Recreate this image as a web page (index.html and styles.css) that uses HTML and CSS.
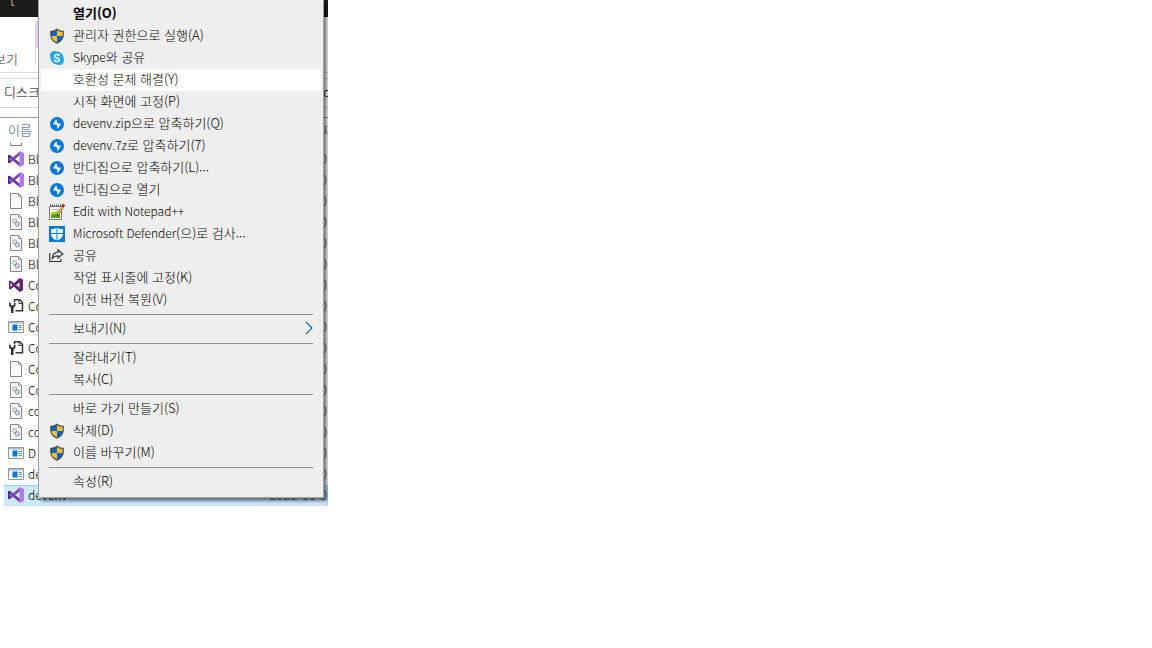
FILE: index.html
```html
<!DOCTYPE html>
<html lang="ko">
<head>
<meta charset="utf-8">
<title>devenv</title>
<link rel="stylesheet" href="styles.css">
</head>
<body>
<svg class="sprite" aria-hidden="true">
  <symbol id="shield" viewBox="0 0 16 16">
    <path d="M8 0.5C6.3 2 3.800 2.800 1.200 2.800V7c0 4 2.800 6.800 6.800 8.800 4-2 6.800-4.800 6.800-8.800V2.800C12.200 2.800 9.700 2 8 0.500z" fill="#4b4b4b"/>
    <path d="M8 2C6.500 3.200 4.500 3.900 2.400 4V8H8z" fill="#0a63c9"/>
    <path d="M8 2C9.500 3.200 11.500 3.900 13.600 4V8H8z" fill="#ffc02e"/>
    <path d="M2.400 8H8v6.400C4.800 12.800 2.600 10.800 2.400 8z" fill="#ffc02e"/>
    <path d="M13.600 8H8v6.400c3.200-1.600 5.400-3.600 5.600-6.400z" fill="#0a63c9"/>
  </symbol>
  <symbol id="skype" viewBox="0 0 16 16">
    <circle cx="5.500" cy="5.500" r="4.500" fill="#28a8ea"/><circle cx="10.500" cy="10.500" r="4.500" fill="#28a8ea"/><circle cx="8" cy="8" r="6.500" fill="#28a8ea"/>
    <path d="M10.300 5.500C9.700 4.300 5.900 4 5.900 6.200 5.900 8.300 10.300 7.500 10.300 9.800c0 2.300-4 2-4.700.4" fill="none" stroke="#fff" stroke-width="1.600" stroke-linecap="round"/>
  </symbol>
  <symbol id="bandizip" viewBox="0 0 16 16">
    <circle cx="8" cy="8" r="7" fill="#0078d7"/>
    <path d="M7.200 3L4 8.300 7.600 8.800 8.800 13 12 7.700 8.400 7.200z" fill="#fff"/>
  </symbol>
  <symbol id="notepad" viewBox="0 0 16 16">
    <path d="M.5 2.500h12v13H.5z" fill="#fff" stroke="#777"/>
    <path d="M2 14V8l9-1v7z" fill="#9bd63a"/><path d="M2 14v-3l9-2v5z" fill="#51a00c"/>
    <path d="M1 1.500h11" stroke="#555" stroke-width="2" stroke-dasharray="1 1"/>
    <path d="M3 5.500h7" stroke="#bbb"/>
    <path d="M13.800 2.500L8.800 11" stroke="#6c4b16" stroke-width="2.600"/><path d="M13.600 3L9 10.600" stroke="#ffc83b" stroke-width="1.500"/>
    <path d="M13 .8l2.600 1.400" stroke="#a91523" stroke-width="2.200"/><path d="M8.200 12.200l.3-2 1.400.8z" fill="#222"/>
  </symbol>
  <symbol id="defender" viewBox="0 0 16 16">
    <path d="M0 0h16v16H0z" fill="#0078d7"/>
    <path d="M8 1.500C6.500 2.700 4.300 3.200 2 3.300V8c0 3 2.800 5.200 6 6.700C11.200 13.200 14 11 14 8V3.300C11.700 3.200 9.500 2.700 8 1.500z" fill="#fff"/>
    <path d="M8 1v14M1 7.500h14" stroke="#0078d7"/>
  </symbol>
  <symbol id="share" viewBox="0 0 16 16">
    <path d="M.8 5v8.500h11v-2.500M9 1.800L13.800 6 9 10V7.800C6.500 7.600 4.800 8.400 3.300 10.400 3.500 6.900 5.500 4.400 9 4.200z" fill="none" stroke="#333" stroke-width="1.200"/>
  </symbol>
  <symbol id="vs" viewBox="0 0 16 16">
    <path d="M0 4.500L1.800 3.700 12 12v3.500L0 5.500z" fill="#6634a6"/>
    <path d="M0 11.500L1.800 12.300 12 4V.5L0 10.500z" fill="#7b43bd"/>
    <path d="M0 4.500L1.800 3.700V12.300L0 11.500z" fill="#52218f"/>
    <path d="M11.500 0L16 2v12l-4.500 2z" fill="#b179f1"/>
  </symbol>
  <symbol id="blend" viewBox="0 0 16 16">
    <path fill-rule="evenodd" d="M11.500 1L15 2.500v11L11.500 15 6 9.700 2.500 12.500 1 11.700V4.300L2.500 3.500 6 6.300zM11.500 5.200L8 8l3.500 2.800zM2.500 6v4L4.500 8z" fill="#68217a"/>
  </symbol>
  <symbol id="page" viewBox="0 0 16 16">
    <path d="M2.500 .5h8l3 3v12h-11z" fill="#fafafa" stroke="#858585"/><path d="M10.500 .5v3h3" fill="none" stroke="#999"/>
  </symbol>
  <symbol id="config" viewBox="0 0 16 16">
    <path d="M2.500 .5h8l3 3v12h-11z" fill="#fafafa" stroke="#858585"/><path d="M10.500 .5v3h3" fill="none" stroke="#999"/>
    <circle cx="6.700" cy="6.800" r="1.900" fill="#eef6fa" stroke="#87969e" stroke-width="1.300" stroke-dasharray="1 .5"/>
    <circle cx="9.300" cy="9.800" r="2.100" fill="#cfe3ee" stroke="#7d8f98" stroke-width="1.300" stroke-dasharray="1 .5"/>
  </symbol>
  <symbol id="tool" viewBox="0 0 16 16">
    <path d="M6.500 4V1.800h5.300L14.500 4.500v8.300H7.500" fill="none" stroke="#383838" stroke-width="1.500"/><path d="M11 2v3.500h3" fill="none" stroke="#383838"/>
    <path d="M1 4.500v3L3 10v5h2.500v-5l2-2.500v-3L5.800 5v2.200H2.800V5z" fill="#333"/>
  </symbol>
  <symbol id="app" viewBox="0 0 16 16">
    <path d="M.5 2.500h15v11H.5z" fill="#fff" stroke="#89969d"/><path d="M1 3h14v1.500H1z" fill="#aebbc2"/>
    <path d="M4.500 5.500h5v6h-5z" fill="#0078d7"/><path d="M10.500 6.500h3.500M10.500 8.500h3.500M10.500 10.500h3.500" stroke="#6d8796"/>
  </symbol>
  <symbol id="chevron" viewBox="0 0 8 14"><path d="M1 1l6 6-6 6" fill="none" stroke="#1268b0" stroke-width="1.200"/></symbol>
</svg>

<main class="explorer">
  <header class="titlebar"><span class="titlebar-text">t</span></header>
  <div class="ribbon">
    <button class="ribbon-tab">보기</button>
    <span class="ribbon-context"></span>
  </div>
  <div class="address"><span>디스크</span><span class="address-end">d</span></div>
  <table class="files">
    <thead><tr><th class="name">이름</th><th class="date">수정한 날짜</th></tr></thead>
    <tbody>
      <tr class="cut"><td class="name"><span class="file"><svg class="icon"><use href="#config"/></svg></span></td><td></td></tr>
      <tr><td class="name"><span class="file"><svg class="icon"><use href="#vs"/></svg>Bl</span></td><td class="date">2022-11-0</td></tr>
      <tr><td class="name"><span class="file"><svg class="icon"><use href="#vs"/></svg>Bl</span></td><td class="date">2022-11-0</td></tr>
      <tr><td class="name"><span class="file"><svg class="icon"><use href="#page"/></svg>Bl</span></td><td class="date">2022-11-0</td></tr>
      <tr><td class="name"><span class="file"><svg class="icon"><use href="#config"/></svg>Bl</span></td><td class="date">2022-11-0</td></tr>
      <tr><td class="name"><span class="file"><svg class="icon"><use href="#config"/></svg>Bl</span></td><td class="date">2022-11-0</td></tr>
      <tr><td class="name"><span class="file"><svg class="icon"><use href="#config"/></svg>Bl</span></td><td class="date">2022-11-0</td></tr>
      <tr><td class="name"><span class="file"><svg class="icon"><use href="#blend"/></svg>Co</span></td><td class="date">2022-11-0</td></tr>
      <tr><td class="name"><span class="file"><svg class="icon"><use href="#tool"/></svg>Co</span></td><td class="date">2022-11-0</td></tr>
      <tr><td class="name"><span class="file"><svg class="icon"><use href="#app"/></svg>Co</span></td><td class="date">2022-11-0</td></tr>
      <tr><td class="name"><span class="file"><svg class="icon"><use href="#tool"/></svg>Co</span></td><td class="date">2022-11-0</td></tr>
      <tr><td class="name"><span class="file"><svg class="icon"><use href="#page"/></svg>Co</span></td><td class="date">2022-11-0</td></tr>
      <tr><td class="name"><span class="file"><svg class="icon"><use href="#config"/></svg>Co</span></td><td class="date">2022-11-0</td></tr>
      <tr><td class="name"><span class="file"><svg class="icon"><use href="#config"/></svg>co</span></td><td class="date">2022-11-0</td></tr>
      <tr><td class="name"><span class="file"><svg class="icon"><use href="#config"/></svg>co</span></td><td class="date">2022-11-0</td></tr>
      <tr><td class="name"><span class="file"><svg class="icon"><use href="#app"/></svg>D</span></td><td class="date">2022-11-0</td></tr>
      <tr><td class="name"><span class="file"><svg class="icon"><use href="#app"/></svg>de</span></td><td class="date">2022-11-0</td></tr>
      <tr class="selected"><td class="name"><span class="file"><svg class="icon"><use href="#vs"/></svg>devenv</span></td><td class="date">2022-11-0</td></tr>
    </tbody>
  </table>

  <div class="menu" role="menu">
    <button class="item default" role="menuitem"><span class="slot"></span>열기(O)</button>
    <button class="item" role="menuitem"><svg class="icon"><use href="#shield"/></svg>관리자 권한으로 실행(A)</button>
    <button class="item" role="menuitem"><svg class="icon"><use href="#skype"/></svg><span><span class="latin">Skype</span>와 공유</span></button>
    <button class="item active" role="menuitem"><span class="slot"></span>호환성 문제 해결(Y)</button>
    <button class="item" role="menuitem"><span class="slot"></span>시작 화면에 고정(P)</button>
    <button class="item" role="menuitem"><svg class="icon"><use href="#bandizip"/></svg><span><span class="latin">devenv.zip</span>으로 압축하기(Q)</span></button>
    <button class="item" role="menuitem"><svg class="icon"><use href="#bandizip"/></svg><span><span class="latin">devenv.7z</span>로 압축하기(7)</span></button>
    <button class="item" role="menuitem"><svg class="icon"><use href="#bandizip"/></svg>반디집으로 압축하기(L)...</button>
    <button class="item" role="menuitem"><svg class="icon"><use href="#bandizip"/></svg>반디집으로 열기</button>
    <button class="item" role="menuitem"><svg class="icon"><use href="#notepad"/></svg><span><span class="latin">Edit with Notepad++</span></span></button>
    <button class="item" role="menuitem"><svg class="icon"><use href="#defender"/></svg><span><span class="latin">Microsoft Defender</span>(으)로 검사...</span></button>
    <button class="item" role="menuitem"><svg class="icon"><use href="#share"/></svg>공유</button>
    <button class="item" role="menuitem"><span class="slot"></span>작업 표시줄에 고정(K)</button>
    <button class="item" role="menuitem"><span class="slot"></span>이전 버전 복원(V)</button>
    <hr class="separator">
    <button class="item" role="menuitem" aria-haspopup="menu"><span class="slot"></span>보내기(N)<svg class="chevron"><use href="#chevron"/></svg></button>
    <hr class="separator">
    <button class="item" role="menuitem"><span class="slot"></span>잘라내기(T)</button>
    <button class="item" role="menuitem"><span class="slot"></span>복사(C)</button>
    <hr class="separator">
    <button class="item" role="menuitem"><span class="slot"></span>바로 가기 만들기(S)</button>
    <button class="item" role="menuitem"><svg class="icon"><use href="#shield"/></svg>삭제(D)</button>
    <button class="item" role="menuitem"><svg class="icon"><use href="#shield"/></svg>이름 바꾸기(M)</button>
    <hr class="separator">
    <button class="item" role="menuitem"><span class="slot"></span>속성(R)</button>
  </div>
</main>
</body>
</html>
```
FILE: styles.css
```css
* { box-sizing: border-box; }
body {
  margin: 0;
  background: #fff;
  color: #000;
  font: 300 13px/16px "Noto Sans CJK KR", sans-serif;
}
button { border: 0; background: none; color: inherit; font: inherit; }
.sprite { position: absolute; width: 0; height: 0; }
.icon { width: 16px; height: 16px; flex: none; }
.latin { font-size: 12px; }

.explorer {
  position: relative;
  width: 328px;
  max-width: 100%;
  overflow: hidden;
  white-space: nowrap;
}
.titlebar {
  height: 17px;
  padding-left: 10px;
  background: #1c1c1c;
  color: #f0d080;
  line-height: 1px;
  overflow: hidden;
}
.ribbon {
  display: flex;
  height: 56px;
  padding-top: 4px;
  border-bottom: 1px solid #d9d9d9;
}
.ribbon-tab {
  width: 35px;
  padding: 24px 0 0;
  margin-left: -6px;
  margin-right: 6px;
  text-align: left;
  line-height: 24px;
  color: #333;
}
.ribbon-context {
  width: 20px;
  height: 44px;
  border-left: 1px solid #d9d9d9;
  background: linear-gradient(#e6c8fb 27px, #fff 27px);
}
.address {
  display: flex;
  justify-content: space-between;
  align-items: center;
  height: 30px;
  margin: 5px 0 9px;
  padding: 0 0 2px 4px;
  border-top: 1px solid #d9d9d9;
  border-bottom: 1px solid #d9d9d9;
}
.address-end { width: 5px; }

.files {
  width: 100%;
  table-layout: fixed;
  border-collapse: collapse;
  border-top: 1px solid #a0a0a0;
}
.files th { height: 25px; padding: 0; font-weight: 300; text-align: left; color: #34506f; }
.files td { height: 21px; padding: 0; }
.files .name { padding-left: 8px; }
.files .date { width: 60px; color: #555; }
.files td.date { padding-right: 1px; text-align: right; }
.file { display: flex; align-items: center; gap: 4px; font-size: 12px; }
.files .cut td { height: 6px; }
.cut .file { height: 3px; margin-bottom: 3px; align-items: flex-end; overflow: hidden; }
.selected { background: #cce8ff; box-shadow: inset 0 0 0 1px #99d1ff; clip-path: inset(0 0 0 4px); }

.menu {
  position: absolute;
  top: 0;
  left: 38px;
  width: 286px;
  padding: 3px 2px 4px;
  border: 1px solid #a0a0a0;
  border-top: 0;
  background: #eee;
  box-shadow: 3px 3px 3px rgba(0, 0, 0, .5);
}
.item {
  display: flex;
  align-items: flex-start;
  gap: 8px;
  width: 100%;
  height: 22px;
  padding: 0 8px;
  line-height: 20px;
  text-align: left;
}
.item .icon { margin-top: 3px; }
.default { font-weight: 700; }
.active { background: #fff; }
.slot { width: 16px; }
.item .chevron { width: 8px; height: 14px; margin: 3px 0 0 auto; }
.separator { height: 1px; margin: 3px 8px; border: 0; background: #919191; }
```
